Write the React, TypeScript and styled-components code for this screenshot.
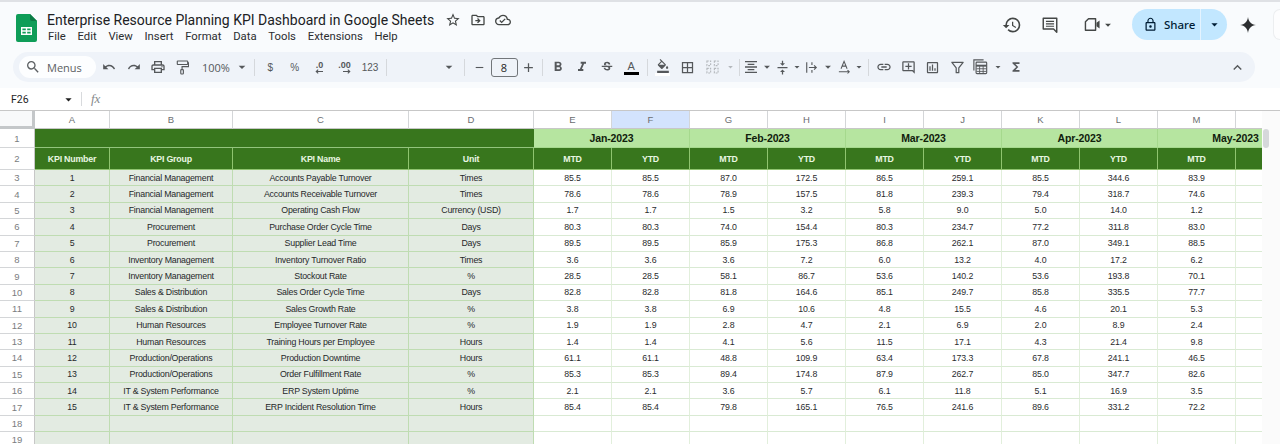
import React from "react";
import styled, { createGlobalStyle } from "styled-components";
import {
  MdAdd,
  MdArrowDropDown,
  MdBorderAll,
  MdExpandLess,
  MdFormatAlignCenter,
  MdFormatBold,
  MdFormatColorFill,
  MdFormatItalic,
  MdFunctions,
  MdHistory,
  MdInsertLink,
  MdLockOutline,
  MdOutlineAddComment,
  MdOutlineCloudDone,
  MdOutlineDriveFileMove,
  MdOutlineInsertChart,
  MdOutlinePrint,
  MdOutlineStarBorder,
  MdRedo,
  MdRemove,
  MdSearch,
  MdStrikethroughS,
  MdUndo,
  MdVerticalAlignCenter,
} from "react-icons/md";

const GlobalStyle = createGlobalStyle`
  html, body {
    margin: 0;
    padding: 0;
    background: #f9fbfd;
    overflow: hidden;
  }
  * { box-sizing: border-box; }
`;

const columns = ["A", "B", "C", "D", "E", "F", "G", "H", "I", "J", "K", "L", "M", ""];
const months = ["Jan-2023", "Feb-2023", "Mar-2023", "Apr-2023", "May-2023"];
const menus = ["File", "Edit", "View", "Insert", "Format", "Data", "Tools", "Extensions", "Help"];
// the N column is cut by the scrollbar, its header text is not visible
const periods = ["MTD", "YTD", "MTD", "YTD", "MTD", "YTD", "MTD", "YTD", "MTD", ""];

const kpis = [
  ["1", "Financial Management", "Accounts Payable Turnover", "Times", "85.5 85.5 87.0 172.5 86.5 259.1 85.5 344.6 83.9"],
  ["2", "Financial Management", "Accounts Receivable Turnover", "Times", "78.6 78.6 78.9 157.5 81.8 239.3 79.4 318.7 74.6"],
  ["3", "Financial Management", "Operating Cash Flow", "Currency (USD)", "1.7 1.7 1.5 3.2 5.8 9.0 5.0 14.0 1.2"],
  ["4", "Procurement", "Purchase Order Cycle Time", "Days", "80.3 80.3 74.0 154.4 80.3 234.7 77.2 311.8 83.0"],
  ["5", "Procurement", "Supplier Lead Time", "Days", "89.5 89.5 85.9 175.3 86.8 262.1 87.0 349.1 88.5"],
  ["6", "Inventory Management", "Inventory Turnover Ratio", "Times", "3.6 3.6 3.6 7.2 6.0 13.2 4.0 17.2 6.2"],
  ["7", "Inventory Management", "Stockout Rate", "%", "28.5 28.5 58.1 86.7 53.6 140.2 53.6 193.8 70.1"],
  ["8", "Sales & Distribution", "Sales Order Cycle Time", "Days", "82.8 82.8 81.8 164.6 85.1 249.7 85.8 335.5 77.7"],
  ["9", "Sales & Distribution", "Sales Growth Rate", "%", "3.8 3.8 6.9 10.6 4.8 15.5 4.6 20.1 5.3"],
  ["10", "Human Resources", "Employee Turnover Rate", "%", "1.9 1.9 2.8 4.7 2.1 6.9 2.0 8.9 2.4"],
  ["11", "Human Resources", "Training Hours per Employee", "Hours", "1.4 1.4 4.1 5.6 11.5 17.1 4.3 21.4 9.8"],
  ["12", "Production/Operations", "Production Downtime", "Hours", "61.1 61.1 48.8 109.9 63.4 173.3 67.8 241.1 46.5"],
  ["13", "Production/Operations", "Order Fulfillment Rate", "%", "85.3 85.3 89.4 174.8 87.9 262.7 85.0 347.7 82.6"],
  ["14", "IT & System Performance", "ERP System Uptime", "%", "2.1 2.1 3.6 5.7 6.1 11.8 5.1 16.9 3.5"],
  ["15", "IT & System Performance", "ERP Incident Resolution Time", "Hours", "85.4 85.4 79.8 165.1 76.5 241.6 89.6 331.2 72.2"],
];

const SheetsLogo = () => (
  <svg width="21" height="28" viewBox="0 0 21 28">
    <path d="M2 0h12l7 7v19a2 2 0 0 1-2 2H2a2 2 0 0 1-2-2V2a2 2 0 0 1 2-2z" fill="#0f9d58" />
    <path d="M14 0l7 7h-5a2 2 0 0 1-2-2z" fill="#0b7a44" />
    <path d="M5 13h11v8H5z M6.4 14.4v1.9h3.4v-1.9z M11.2 14.4v1.9h3.4v-1.9z M6.4 17.7v1.9h3.4v-1.9z M11.2 17.7v1.9h3.4v-1.9z" fill="#fff" fillRule="evenodd" />
  </svg>
);

const CommentIcon = () => (
  <svg width="18" height="18" viewBox="0 0 20 20" fill="none" stroke="#444746" strokeWidth="1.6">
    <path d="M2.5 2.5h15v15.5l-3.5-3.5H2.5z" strokeLinejoin="round" />
    <path d="M5.5 6h9M5.5 8.7h9M5.5 11.4h9" strokeWidth="1.3" />
  </svg>
);

const VideoIcon = () => (
  <svg width="17" height="15" viewBox="0 0 19 17" fill="none" stroke="#444746" strokeWidth="1.6">
    <path d="M1.5 5.5L5 2h8v13H1.5z" strokeLinejoin="round" />
    <path d="M14 6.5l3.5-2.5v9L14 10.5z" fill="#444746" stroke="none" />
  </svg>
);

const SparkIcon = () => (
  <svg width="16" height="16" viewBox="0 0 17 17">
    <path d="M8.5 0C9.2 5 12 7.8 17 8.5 12 9.2 9.2 12 8.5 17 7.8 12 5 9.2 0 8.5 5 7.8 7.8 5 8.5 0z" fill="#2d2f31" />
  </svg>
);

const PaintIcon = () => (
  <svg width="13" height="15" viewBox="0 0 15 17" fill="none" stroke="#55585b" strokeWidth="1.3">
    <rect x="1.5" y="1" width="12" height="4" rx="0.6" />
    <path d="M13.5 3H14.5V7.5H7V10.5" />
    <rect x="5.5" y="11" width="3" height="5" rx="0.8" />
  </svg>
);

const DecreaseDecimals = () => (
  <DecimalMark>
    .0
    <svg width="8" height="5" viewBox="0 0 9 5">
      <path d="M9 2.5H2M3.6 0.5L1.4 2.5 3.6 4.5" fill="none" stroke="#55585b" strokeWidth="1.2" />
    </svg>
  </DecimalMark>
);

const IncreaseDecimals = () => (
  <DecimalMark>
    .00
    <svg width="8" height="5" viewBox="0 0 9 5">
      <path d="M0 2.5H7M5.4 0.5L7.6 2.5 5.4 4.5" fill="none" stroke="#55585b" strokeWidth="1.2" />
    </svg>
  </DecimalMark>
);

const MergeIcon = () => (
  <svg width="13" height="14" viewBox="0 0 14 15" fill="none" stroke="#b4b8bc" strokeWidth="1.2" strokeDasharray="2 1.2">
    <path d="M1 1h4v5H1zM9 1h4v5H9zM1 9h4v5H1zM9 9h4v5H9z" />
  </svg>
);

const WrapIcon = () => (
  <svg width="13" height="13" viewBox="0 0 15 14" fill="none" stroke="#55585b" strokeWidth="1.3">
    <path d="M2 1v12M8 1v3M8 10v3M4.5 7H13M10.5 4.5L13 7l-2.5 2.5" />
  </svg>
);

const RotateIcon = () => (
  <svg width="13" height="14" viewBox="0 0 15 16" fill="none" stroke="#55585b" strokeWidth="1.2">
    <path d="M3.5 10L7 1.5 10.5 10M4.8 7h4.4M1 13.5h12M11 11.5l2 2-2 2" />
  </svg>
);

const FilterIcon = () => (
  <svg width="13" height="13" viewBox="0 0 15 15" fill="none" stroke="#55585b" strokeWidth="1.4">
    <path d="M1 1.5h13L9 8v5.5H6V8z" strokeLinejoin="round" />
  </svg>
);

const TableIcon = () => (
  <svg width="15" height="16" viewBox="0 0 17 18" fill="none" stroke="#55585b" strokeWidth="1.3">
    <path d="M1 13V1h11" />
    <rect x="3.5" y="3.5" width="12" height="13" rx="1" />
    <path d="M3.5 7.5h12" strokeWidth="2.2" />
    <path d="M7.5 8v8M11.5 8v8M4 11h11M4 14h11" strokeWidth="1" />
  </svg>
);

const App = () => {
  return (
    <Page>
      <GlobalStyle />
      <TopStrip />
      <TitleBar>
        <LogoSlot>
          <SheetsLogo />
        </LogoSlot>
        <TitleColumn>
          <TitleRow>
            <DocTitle>Enterprise Resource Planning KPI Dashboard in Google Sheets</DocTitle>
            <TitleIcons>
              <MdOutlineStarBorder size={16} />
              <MdOutlineDriveFileMove size={16} />
              <MdOutlineCloudDone size={16} />
            </TitleIcons>
          </TitleRow>
          <MenuBar>
            {menus.map((m) => (
              <MenuItem key={m}>{m}</MenuItem>
            ))}
          </MenuBar>
        </TitleColumn>
        <HeaderActions>
          <HeadAction $w={38}>
            <MdHistory size={20} />
          </HeadAction>
          <HeadAction $w={38}>
            <CommentIcon />
          </HeadAction>
          <VideoAction>
            <VideoIcon />
            <MdArrowDropDown size={14} />
          </VideoAction>
          <ShareButton>
            <ShareMain>
              <MdLockOutline size={15} />
              Share
            </ShareMain>
            <ShareCaret>
              <MdArrowDropDown size={15} />
            </ShareCaret>
          </ShareButton>
          <SparkSlot>
            <SparkIcon />
          </SparkSlot>
          <AvatarEdge />
        </HeaderActions>
      </TitleBar>

      <Toolbar>
        <MenuSearch>
          <MdSearch size={16} />
          <span>Menus</span>
        </MenuSearch>
        <Tool $w={24.5}><MdUndo size={14} /></Tool>
        <Tool $w={24.5}><MdRedo size={14} /></Tool>
        <Tool $w={24.5}><MdOutlinePrint size={16} /></Tool>
        <Tool $w={24.5}><PaintIcon /></Tool>
        <ZoomSelect>
          100%
          <MdArrowDropDown size={16} />
        </ZoomSelect>
        <Divider />
        <Tool $w={24.5}><TextTool>$</TextTool></Tool>
        <Tool $w={24.5}><TextTool>%</TextTool></Tool>
        <Tool $w={24.5}><DecreaseDecimals /></Tool>
        <Tool $w={26}><IncreaseDecimals /></Tool>
        <Tool $w={25}><TextTool>123</TextTool></Tool>
        <Divider />
        <FontSelect>
          <MdArrowDropDown size={16} />
        </FontSelect>
        <Divider />
        <Tool $w={23}><MdRemove size={13} /></Tool>
        <SizeBox>8</SizeBox>
        <Tool $w={21}><MdAdd size={15} /></Tool>
        <Divider />
        <Tool $w={24.5}><MdFormatBold size={16} /></Tool>
        <Tool $w={24.5}><MdFormatItalic size={16} /></Tool>
        <Tool $w={24.5}><MdStrikethroughS size={14} /></Tool>
        <Tool $w={24.5}>
          <Underlined $bar="#000000">A</Underlined>
        </Tool>
        <Divider />
        <Tool $w={24.5}>
          <FillStack>
            <MdFormatColorFill size={14} />
          </FillStack>
        </Tool>
        <Tool $w={24.5}><MdBorderAll size={15} /></Tool>
        <Tool $w={25}><MergeIcon /></Tool>
        <Tool $w={11} $faded><MdArrowDropDown size={14} /></Tool>
        <Divider />
        <Tool $w={17}><MdFormatAlignCenter size={16} /></Tool>
        <Tool $w={14}><MdArrowDropDown size={14} /></Tool>
        <Tool $w={17}><MdVerticalAlignCenter size={15} /></Tool>
        <Tool $w={12}><MdArrowDropDown size={14} /></Tool>
        <Tool $w={17}><WrapIcon /></Tool>
        <Tool $w={16}><MdArrowDropDown size={14} /></Tool>
        <Tool $w={17}><RotateIcon /></Tool>
        <Tool $w={12}><MdArrowDropDown size={14} /></Tool>
        <Divider />
        <Tool $w={24.5}><MdInsertLink size={16} /></Tool>
        <Tool $w={24.5}><MdOutlineAddComment size={15} /></Tool>
        <Tool $w={24.5}><MdOutlineInsertChart size={15} /></Tool>
        <Tool $w={24.5}><FilterIcon /></Tool>
        <Tool $w={22}><TableIcon /></Tool>
        <Tool $w={12}><MdArrowDropDown size={14} /></Tool>
        <Tool $w={24}><MdFunctions size={14} /></Tool>
        <CollapseSlot>
          <MdExpandLess size={17} />
        </CollapseSlot>
      </Toolbar>

      <FormulaBar>
        <NameBox>
          F26
          <MdArrowDropDown size={15} />
        </NameBox>
        <FormulaDivider />
        <FxMark>fx</FxMark>
      </FormulaBar>

      <SheetArea>
        <SheetClip>
          <Grid>
            <Corner />
            {columns.map((c) => (
              <ColLetter key={c || "N"} $active={c === "F"}>{c}</ColLetter>
            ))}

            <RowNum>1</RowNum>
            <BandCell />
            {months.map((m) => (
              <MonthCell key={m}>{m}</MonthCell>
            ))}

            <RowNum>2</RowNum>
            {["KPI Number", "KPI Group", "KPI Name", "Unit"].map((h) => (
              <HeadCell key={h}>{h}</HeadCell>
            ))}
            {periods.map((p, i) => (
              <HeadCell key={i}>{p}</HeadCell>
            ))}

            {kpis.map((row, r) => (
              <React.Fragment key={row[0]}>
                <RowNum>{r + 3}</RowNum>
                <KpiCell>{row[0]}</KpiCell>
                <KpiCell>{row[1]}</KpiCell>
                <KpiCell>{row[2]}</KpiCell>
                <KpiCell>{row[3]}</KpiCell>
                {row[4].split(" ").map((v, i) => (
                  <DataCell key={i}>{v}</DataCell>
                ))}
                <DataCell />
              </React.Fragment>
            ))}

            {[18, 19].map((n) => (
              <React.Fragment key={n}>
                <RowNum>{n}</RowNum>
                <KpiCell />
                <KpiCell />
                <KpiCell />
                <KpiCell />
                {Array.from({ length: 10 }, (_, i) => (
                  <DataCell key={i} />
                ))}
              </React.Fragment>
            ))}
          </Grid>
        </SheetClip>
        <ScrollTrack>
          <ScrollThumb />
        </ScrollTrack>
      </SheetArea>
    </Page>
  );
};

export default App;

const Page = styled.div`
  width: 1280px;
  height: 444px;
  overflow: hidden;
  background: #f9fbfd;
  font-family: "Open Sans", "Liberation Sans", sans-serif;
  color: #1f1f1f;
`;

const TopStrip = styled.div`
  height: 2px;
  background: #dfe1e5;
`;

const TitleBar = styled.div`
  height: 50px;
  display: flex;
  align-items: flex-start;
  padding-left: 16px;
`;

const LogoSlot = styled.div`
  width: 31px;
  padding-top: 12px;
  display: flex;
`;

const TitleColumn = styled.div`
  display: flex;
  flex-direction: column;
  padding-top: 8px;
`;

const TitleRow = styled.div`
  display: flex;
  align-items: center;
  height: 19px;
`;

const DocTitle = styled.div`
  width: 398px;
  font-family: "Roboto", "Open Sans", sans-serif;
  font-size: 14px;
  white-space: nowrap;
  color: #202124;
`;

const TitleIcons = styled.div`
  display: flex;
  align-items: center;
  gap: 9px;
  color: #444746;
`;

const MenuBar = styled.div`
  display: flex;
  gap: 11.75px;
  margin-left: 1px;
`;

const MenuItem = styled.span`
  font-family: "Roboto", sans-serif;
  font-size: 11.3px;
  line-height: 15px;
  color: #2b2d30;
`;

const HeaderActions = styled.div`
  margin-left: auto;
  display: flex;
  align-items: center;
  height: 31px;
  margin-top: 7px;
  color: #444746;
`;

const HeadAction = styled.div<{ $w: number }>`
  width: ${(p) => p.$w}px;
  display: flex;
  align-items: center;
  justify-content: center;
`;

const VideoAction = styled.div`
  width: 52px;
  display: flex;
  align-items: center;
  justify-content: center;
  padding-left: 8px;
  margin-right: 11px;
`;

const ShareButton = styled.div`
  width: 95px;
  height: 31px;
  display: flex;
  border-radius: 16px;
  overflow: hidden;
  background: #c2e7ff;
  color: #001d35;
`;

const ShareMain = styled.div`
  width: 69px;
  display: flex;
  align-items: center;
  gap: 6px;
  padding-left: 11px;
  font-family: "Noto Sans", sans-serif;
  font-size: 11.5px;
  font-weight: 500;
  border-right: 1px solid #e4f3ff;
`;

const ShareCaret = styled.div`
  flex: 1;
  display: flex;
  align-items: center;
  justify-content: center;
`;

const SparkSlot = styled.div`
  width: 42px;
  display: flex;
  align-items: center;
  justify-content: center;
`;

const AvatarEdge = styled.div`
  width: 7px;
  height: 31px;
  margin-left: 4px;
  border: 1px solid #eceef0;
  border-right: none;
  border-radius: 16px 0 0 16px;
  background: #fdfdfe;
`;

const Toolbar = styled.div`
  height: 30px;
  margin: 0 25px 0 13px;
  padding-left: 6px;
  display: flex;
  align-items: center;
  border-radius: 15px;
  background: #eff3f9;
  color: #55585b;
`;

const MenuSearch = styled.div`
  width: 77px;
  height: 22px;
  margin-right: 1px;
  flex: none;
  display: flex;
  align-items: center;
  gap: 6px;
  padding-left: 6px;
  border-radius: 11px;
  background: #fdfeff;
  font-size: 11px;
  color: #5c6063;
`;

const Tool = styled.div<{ $w: number; $faded?: boolean }>`
  width: ${(p) => p.$w}px;
  flex: none;
  display: flex;
  align-items: center;
  justify-content: center;
  color: ${(p) => (p.$faded ? "#b4b8bc" : "#55585b")};
`;

const TextTool = styled.span`
  font-family: "Liberation Sans", sans-serif;
  font-size: 10px;
  color: #55585b;
`;

const DecimalMark = styled.span`
  display: flex;
  flex-direction: column;
  align-items: flex-end;
  font-family: "Liberation Sans", sans-serif;
  font-size: 9px;
  font-weight: 700;
  line-height: 8px;
`;

const ZoomSelect = styled.div`
  width: 56px;
  flex: none;
  padding-left: 7px;
  display: flex;
  align-items: center;
  gap: 4px;
  font-size: 11px;
  color: #55585b;
`;

const Divider = styled.div`
  width: 1px;
  height: 17px;
  margin: 0 3px;
  flex: none;
  background: #d5d8dc;
`;

const FontSelect = styled.div`
  width: 71px;
  flex: none;
  display: flex;
  justify-content: flex-end;
  padding-right: 4px;
`;

const SizeBox = styled.div`
  width: 27px;
  height: 19px;
  flex: none;
  display: flex;
  align-items: center;
  justify-content: center;
  border: 1px solid #72767a;
  border-radius: 3px;
  font-size: 11px;
  color: #1f1f1f;
`;

const Underlined = styled.span<{ $bar: string }>`
  width: 15px;
  text-align: center;
  font-family: "Liberation Sans", sans-serif;
  font-size: 11px;
  line-height: 12px;
  border-bottom: 3px solid ${(p) => p.$bar};
  color: #55585b;
`;

const FillStack = styled.span`
  width: 15px;
  display: flex;
  justify-content: center;
  border-bottom: 3px solid #ffffff;
`;

const CollapseSlot = styled.div`
  margin-left: auto;
  width: 36px;
  display: flex;
  justify-content: center;
`;

const FormulaBar = styled.div`
  height: 22px;
  margin-top: 6px;
  display: flex;
  align-items: center;
  background: #ffffff;
  color: #444746;
`;

const NameBox = styled.div`
  width: 81px;
  padding-left: 11px;
  padding-right: 5px;
  display: flex;
  align-items: center;
  justify-content: space-between;
  font-family: "Roboto", sans-serif;
  font-size: 10.5px;
  color: #1f1f1f;
`;

const FormulaDivider = styled.div`
  width: 1px;
  height: 14px;
  background: #d8dadd;
`;

const FxMark = styled.span`
  margin-left: 9px;
  font-family: "Liberation Serif", serif;
  font-style: italic;
  font-size: 13px;
  color: #85888b;
`;

const SheetArea = styled.div`
  display: flex;
  height: 334px;
  background: #ffffff;
  border-top: 1px solid #c7c7c7;
`;

const SheetClip = styled.div`
  width: 1262px;
  flex: none;
  overflow: hidden;
`;

const Grid = styled.div`
  display: grid;
  width: 1305px;
  grid-template-columns: 35px 75px 123px 176px 125px repeat(10, 78px);
  grid-template-rows: 18px 19px 22px repeat(17, 16.4px);
`;

const Corner = styled.div`
  background: #f8f9fa;
  border-right: 3px solid #c4c7c9;
  border-bottom: 3px solid #c4c7c9;
`;

const ColLetter = styled.div<{ $active?: boolean }>`
  display: flex;
  align-items: center;
  justify-content: center;
  background: ${(p) => (p.$active ? "#d3e3fd" : "#ffffff")};
  border-right: 1px solid #d4d6d8;
  border-bottom: 1px solid #c7c7c7;
  font-family: "Liberation Sans", sans-serif;
  font-size: 9.5px;
  color: #6a6d70;
`;

const RowNum = styled.div`
  display: flex;
  align-items: center;
  justify-content: center;
  background: #ffffff;
  border-right: 1px solid #c7c7c7;
  border-bottom: 1px solid #d4d6d8;
  font-family: "Liberation Sans", sans-serif;
  font-size: 9.5px;
  color: #7a7d80;
`;

const BandCell = styled.div`
  grid-column: span 4;
  background: #38761d;
  border-bottom: 1px solid #93c47d;
`;

const MonthCell = styled.div`
  grid-column: span 2;
  display: flex;
  align-items: center;
  justify-content: center;
  background: #b6e5a0;
  border-right: 1px solid #a5d98d;
  border-bottom: 1px solid #a5d98d;
  font-family: "Liberation Sans", sans-serif;
  font-size: 10.5px;
  font-weight: 700;
  letter-spacing: -0.1px;
  color: #10200c;
`;

const HeadCell = styled.div`
  display: flex;
  align-items: center;
  justify-content: center;
  background: #38761d;
  border-right: 1px solid #8fc46f;
  border-bottom: 1px solid #8fc46f;
  font-family: "Liberation Sans", sans-serif;
  font-size: 8.8px;
  font-weight: 700;
  letter-spacing: -0.2px;
  color: #e9f7e2;
`;

const KpiCell = styled.div`
  display: flex;
  align-items: center;
  justify-content: center;
  min-width: 0;
  white-space: nowrap;
  background: #e3ebe2;
  border-right: 1px solid #bfdcb2;
  border-bottom: 1px solid #bfdcb2;
  font-family: "Liberation Sans", sans-serif;
  font-size: 8.8px;
  letter-spacing: -0.22px;
  color: #26282a;
`;

const DataCell = styled.div`
  display: flex;
  align-items: center;
  justify-content: center;
  background: #ffffff;
  border-right: 1px solid #e2efdc;
  border-bottom: 1px solid #d9ead3;
  font-family: "Liberation Sans", sans-serif;
  font-size: 8.8px;
  letter-spacing: -0.15px;
  color: #2a2c2e;
`;

const ScrollTrack = styled.div`
  flex: 1;
  padding-top: 18px;
  background: #fbfbfb;
`;

const ScrollThumb = styled.div`
  width: 6px;
  height: 19px;
  margin-left: 1px;
  border-radius: 3px;
  background: #d6d8db;
`;
